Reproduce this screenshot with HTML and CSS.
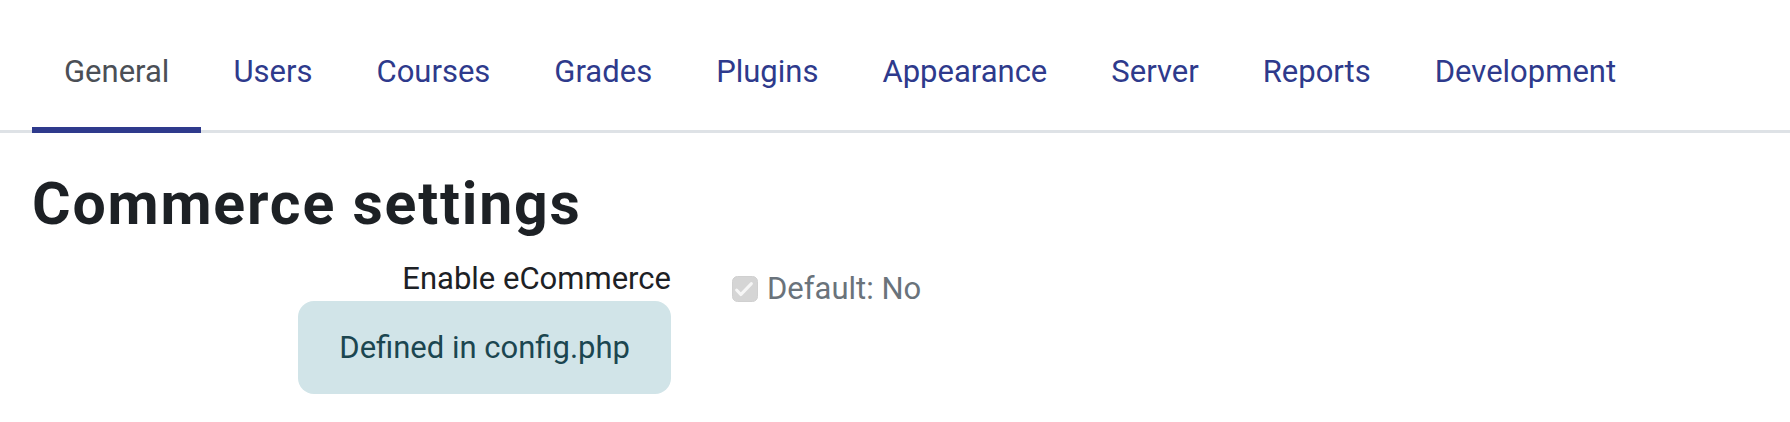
FILE: index.html
```html
<!DOCTYPE html>
<html lang="en">
<head>
<meta charset="utf-8">
<title>Commerce settings</title>
<link rel="stylesheet" href="styles.css">
</head>
<body>
  <nav class="secondary-nav">
    <ul class="tabs">
      <li><a class="tab active" href="#">General</a></li>
      <li><a class="tab" href="#">Users</a></li>
      <li><a class="tab" href="#">Courses</a></li>
      <li><a class="tab" href="#">Grades</a></li>
      <li><a class="tab" href="#">Plugins</a></li>
      <li><a class="tab" href="#">Appearance</a></li>
      <li><a class="tab" href="#">Server</a></li>
      <li><a class="tab" href="#">Reports</a></li>
      <li><a class="tab" href="#">Development</a></li>
    </ul>
  </nav>

  <main class="page">
    <h2 class="page-title">Commerce settings</h2>

    <div class="setting-row">
      <div class="setting-label">
        <label class="label-text" for="enableecommerce">Enable eCommerce</label>
        <div class="config-note">Defined in config.php</div>
      </div>
      <div class="setting-field">
        <span class="checkbox" id="enableecommerce" role="checkbox" aria-checked="true" aria-disabled="true">
          <svg viewBox="0 0 26 26" width="26" height="26" aria-hidden="true">
            <rect x="0.5" y="0.5" width="25" height="25" rx="5" fill="#d5d5d5" stroke="#d0d0d0"/>
            <path d="M4.6 14 L8.8 18.6 L19.4 7.6" fill="none" stroke="#f6f6f6" stroke-width="3" stroke-linecap="round" stroke-linejoin="round"/>
          </svg>
        </span>
        <span class="default-info">Default: No</span>
      </div>
    </div>
  </main>
</body>
</html>
```

FILE: styles.css
```css
html, body {
  margin: 0;
  padding: 0;
  background: #ffffff;
}

body {
  font-family: Roboto, "Noto Sans", sans-serif;
  color: #1d2125;
  font-size: 31px;
  line-height: 36px;
}

/* Secondary navigation tabs */
.secondary-nav {
  border-bottom: 3px solid #dee2e6;
}

.tabs {
  list-style: none;
  margin: 0;
  padding: 0 0 0 32px;
  display: flex;
}

.tab {
  display: block;
  padding: 54px 32px 37px;
  margin-bottom: -3px;
  border-bottom: 6px solid transparent;
  color: #2e3a8c;
  text-decoration: none;
  font-size: 31px;
  line-height: 36px;
}

.tab.active {
  color: #4b4f56;
  border-bottom-color: #2e3a8c;
}

/* Page content */
.page {
  padding: 0 32px;
}

.page-title {
  margin: 37px 0 0;
  font-size: 59px;
  line-height: 68px;
  font-weight: 700;
  letter-spacing: 1.8px;
  color: #1d2125;
}

.setting-row {
  display: flex;
  margin-top: 23px;
}

.setting-label {
  width: 639px;
  display: flex;
  flex-direction: column;
  align-items: flex-end;
  gap: 4px;
}

.label-text {
  font-size: 31px;
  line-height: 36px;
  color: #1d2125;
}

.config-note {
  background: #d1e4e8;
  color: #1b4650;
  border-radius: 16px;
  padding: 28.5px 41px;
  font-size: 31px;
  line-height: 36px;
}

.setting-field {
  margin-left: 61px;
  padding-top: 10px;
  display: flex;
  align-items: center;
  gap: 9px;
  height: 36px;
}

.checkbox {
  display: inline-flex;
  width: 26px;
  height: 26px;
}

.default-info {
  color: #6a737b;
  font-size: 31px;
  line-height: 36px;
}
```
